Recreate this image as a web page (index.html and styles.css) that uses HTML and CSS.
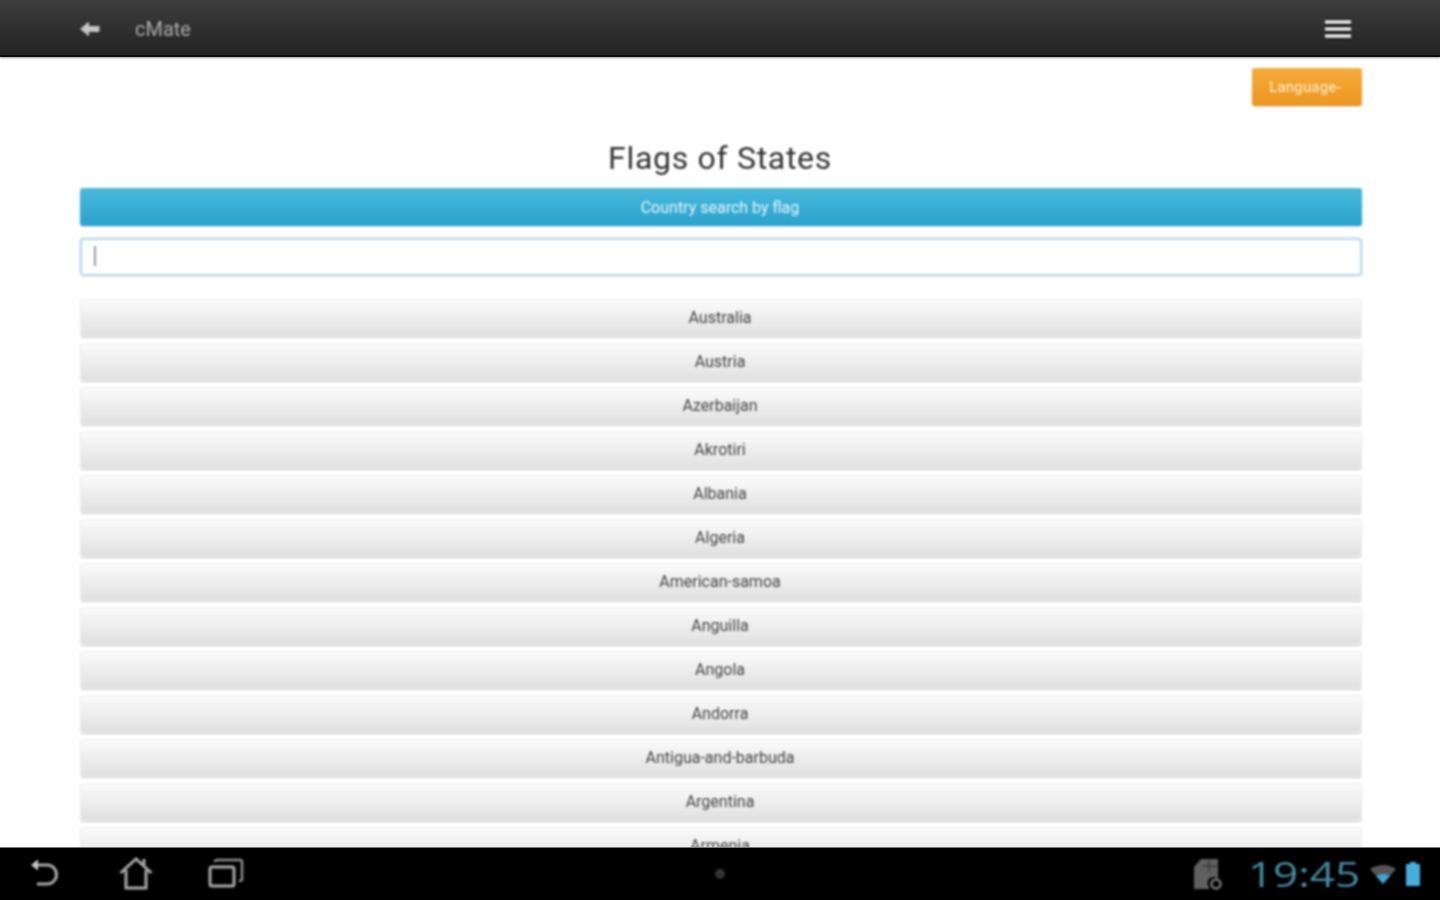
FILE: index.html
```html
<!DOCTYPE html>
<html lang="en">
<head>
<meta charset="utf-8">
<title>cMate</title>
<link rel="stylesheet" href="styles.css">
</head>
<body>
<div class="screen">
  <header class="topbar">
    <svg class="back-icon" width="22" height="18" viewBox="0 0 22 18"><path d="M1 9 L10 1.500 L10 6 L20.500 6 L20.500 12 L10 12 L10 16.500 Z" fill="#c4c4c4"/></svg>
    <span class="app-name">cMate</span>
    <span class="spacer"></span>
    <span class="menu-icon"><i></i><i></i><i></i></span>
  </header>
  <main class="content">
    <div class="lang-row"><button class="lang-btn">Language-</button></div>
    <h1 class="title">Flags of States</h1>
    <div class="search-head">Country search by flag</div>
    <div class="search-input"><span class="caret"></span></div>
    <ul class="list">
      <li>Australia</li>
      <li>Austria</li>
      <li>Azerbaijan</li>
      <li>Akrotiri</li>
      <li>Albania</li>
      <li>Algeria</li>
      <li>American-samoa</li>
      <li>Anguilla</li>
      <li>Angola</li>
      <li>Andorra</li>
      <li>Antigua-and-barbuda</li>
      <li>Argentina</li>
      <li>Armenia</li>
    </ul>
  </main>
  <footer class="sysbar">
    <div class="nav-icons">
      <svg width="36" height="36" viewBox="0 0 36 36" fill="none"><path d="M5 9 H19 A9.500 9.500 0 0 1 19 28 H9" stroke="#a8a8a8" stroke-width="3"/><path d="M3 9 L10 3.500 L10 14.500 Z" fill="#c8c8c8"/></svg>
      <svg width="36" height="36" viewBox="0 0 36 36" fill="none"><path d="M2.500 17 L18 3 L33.500 17 M8 14 V32 H28 V14" stroke="#a8a8a8" stroke-width="3"/><path d="M26 3 V9" stroke="#a8a8a8" stroke-width="3"/></svg>
      <svg width="36" height="36" viewBox="0 0 36 36" fill="none"><rect x="2" y="11" width="24" height="19" rx="2" stroke="#a8a8a8" stroke-width="3"/><path d="M7 6 Q7 4 9 4 H32 Q34 4 34 6 V23 Q34 25 31 25" stroke="#8c8c8c" stroke-width="2.500"/></svg>
    </div>
    <span class="home-dot"></span>
    <div class="status">
      <svg width="32" height="32" viewBox="0 0 32 32"><path d="M9 1 H26 V21 A6 6 0 0 0 17 29 V31 H2 V9 Z" fill="#5f5f5f"/><path d="M17 2 V14 M11 8 H25" stroke="#2a2a2a" stroke-width="1"/><circle cx="24" cy="26" r="4.500" fill="none" stroke="#777" stroke-width="2.500"/></svg>
      <span class="clock">19:45</span>
      <svg class="wifi" width="30" height="22" viewBox="0 0 30 22"><path d="M3 6 Q17 -2 29 6 L16 21 Z" fill="#555"/><path d="M9 13 Q16 9 23 13 L16 21 Z" fill="#3fa6d4"/></svg>
      <svg width="16" height="24" viewBox="0 0 16 24"><path d="M5 0 H11 V2 H15 V24 H1 V2 H5 Z" fill="#45aede"/></svg>
    </div>
  </footer>
</div>
</body>
</html>
```

FILE: styles.css
```css
* { box-sizing: border-box; }
html, body { margin: 0; height: 100%; overflow: hidden; background: #fff; }
.screen {
  width: 1440px;
  height: 900px;
  display: flex;
  flex-direction: column;
  overflow: hidden;
  font-family: "Liberation Sans", Arial, sans-serif;
}
.topbar > *, .content > *, .sysbar > * { filter: blur(0.8px); }
.topbar {
  height: 57px;
  flex: none;
  display: flex;
  align-items: center;
  padding: 3px 89px 0 79px;
  background: linear-gradient(#3d3d3d, #222222);
  border-bottom: 2px solid #0b0b0b;
  box-shadow: 0 1px 2px #999;
  position: relative;
  z-index: 1;
}
.back-icon { flex: none; }
.app-name {
  margin-left: 34px;
  color: #ababab;
  font-size: 20px;
  font-weight: 400;
  font-family: Roboto, sans-serif;
}
.spacer { flex: 1; }
.menu-icon {
  width: 26px;
  display: flex;
  flex-direction: column;
  gap: 3px;
  padding: 1px 0;
  background: #0c0c0c;
}
.menu-icon i { display: block; height: 4px; background: #dcdcdc; }
.content {
  flex: 1;
  min-height: 0;
  overflow: hidden;
  padding: 11px 78px 0 80px;
  background: #fff;
}
.lang-row { display: flex; justify-content: flex-end; }
.lang-btn {
  width: 110px;
  height: 38px;
  padding: 0 4px 0 0;
  border: 0;
  border-radius: 3px;
  background: linear-gradient(#f5ac3a, #ec961f);
  color: #fbeed8;
  font: 15px Roboto, sans-serif;
  letter-spacing: 0.2px;
  box-shadow: 0 1px 1px #ddd;
}
.title {
  margin: 34px 2px 0 0;
  height: 48px;
  text-align: center;
  font: 400 32px/36px Roboto, sans-serif;
  letter-spacing: 0.7px;
  color: #333;
}
.search-head {
  height: 38px;
  padding-right: 2px;
  line-height: 40px;
  text-align: center;
  font-size: 16px;
  font-family: Roboto, sans-serif;
  color: #e6f5fb;
  border-radius: 3px;
  background: linear-gradient(#4ab9dc, #2aa3cd);
  box-shadow: 0 1px 2px #cde6f0;
}
.search-input {
  height: 38px;
  margin-top: 12px;
  padding: 6px 12px;
  border: 2px solid #b5d9e8;
  border-radius: 4px;
  background: #fff;
  box-shadow: 0 0 3px #c7ddf2;
}
.caret { display: block; width: 2px; height: 20px; background: #999; }
.list {
  list-style: none;
  margin: 23px 0 0;
  padding: 0;
  display: flex;
  flex-direction: column;
  gap: 6px;
}
.list li {
  height: 38px;
  flex: none;
  padding-right: 2px;
  line-height: 36px;
  text-align: center;
  font-size: 16px;
  font-family: Roboto, sans-serif;
  color: #444;
  border: 1px solid #eeeeee;
  border-radius: 3px;
  background: linear-gradient(#fbfbfb, #e0e0e0);
  box-shadow: 0 1px 1px #ccc;
}
.sysbar {
  height: 53px;
  flex: none;
  display: flex;
  align-items: center;
  padding: 0 19px 0 28px;
  background: #000;
  border-top: 1px solid #777;
  position: relative;
}
.nav-icons { display: flex; gap: 54px; }
.home-dot {
  position: absolute;
  left: 715px;
  top: 21px;
  width: 10px;
  height: 10px;
  border-radius: 50%;
  background: #333;
}
.status { margin-left: auto; display: flex; align-items: center; gap: 8px; }
.clock {
  width: 110px;
  margin-left: 17px;
  text-align: center;
  white-space: nowrap;
  color: #43899e;
  font: 400 34px/40px "Open Sans", sans-serif;
  transform: scaleX(1.3);
}
```
